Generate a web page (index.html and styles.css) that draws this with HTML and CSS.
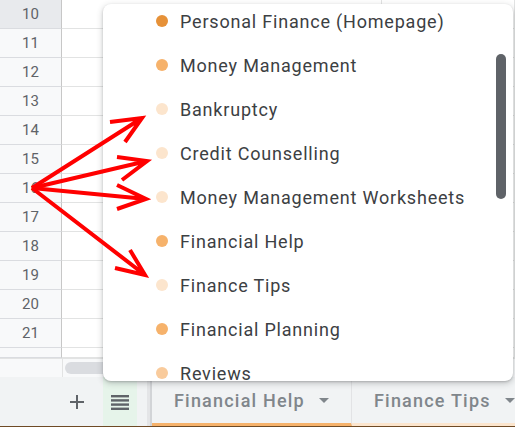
FILE: index.html
```html
<!DOCTYPE html>
<html>
<head>
<meta charset="utf-8">
<link rel="stylesheet" href="styles.css">
</head>
<body>
<div class="app">
  <div class="sheet">
    <div class="row sel"><div class="rh">10</div><div class="c c1"></div><div class="c c2"></div></div>
    <div class="row"><div class="rh">11</div><div class="c c1"></div><div class="c c2"></div></div>
    <div class="row"><div class="rh">12</div><div class="c c1"></div><div class="c c2"></div></div>
    <div class="row"><div class="rh">13</div><div class="c c1"></div><div class="c c2"></div></div>
    <div class="row"><div class="rh">14</div><div class="c c1"></div><div class="c c2"></div></div>
    <div class="row"><div class="rh">15</div><div class="c c1"></div><div class="c c2"></div></div>
    <div class="row"><div class="rh">16</div><div class="c c1"></div><div class="c c2"></div></div>
    <div class="row"><div class="rh">17</div><div class="c c1"></div><div class="c c2"></div></div>
    <div class="row"><div class="rh">18</div><div class="c c1"></div><div class="c c2"></div></div>
    <div class="row"><div class="rh">19</div><div class="c c1"></div><div class="c c2"></div></div>
    <div class="row"><div class="rh">20</div><div class="c c1"></div><div class="c c2"></div></div>
    <div class="row"><div class="rh">21</div><div class="c c1"></div><div class="c c2"></div></div>
    <div class="row part"><div class="rh"></div><div class="c c1"></div><div class="c c2"></div></div>
  </div>
  <div class="hscroll"><div class="hs-corner"></div><div class="hs-track"><div class="hs-thumb"></div></div></div>
  <div class="bottombar">
    <div class="add">
      <svg width="14" height="14" viewBox="0 0 14 14"><path d="M6 0h2v6h6v2H8v6H6V8H0V6h6z" fill="#5f6368"/></svg>
    </div>
    <div class="listbtn">
      <svg width="18" height="16" viewBox="0 0 18 16"><rect x="0" y="1" width="18" height="2.4" fill="#5f6368"/><rect x="0" y="5.2" width="18" height="2.4" fill="#5f6368"/><rect x="0" y="9.4" width="18" height="2.4" fill="#5f6368"/><rect x="0" y="13.6" width="18" height="2.4" fill="#5f6368"/></svg>
    </div>
    <div class="sep"></div>
    <div class="tab tab-a"><span>Financial Help</span><span class="caret"></span></div>
    <div class="tab tab-b"><span>Finance Tips</span><span class="caret"></span></div>
  </div>
</div>

<div class="menu">
  <ul class="list">
    <li><span class="dot d1"></span>Personal Finance (Homepage)</li>
    <li><span class="dot d2"></span>Money Management</li>
    <li><span class="dot d3"></span>Bankruptcy</li>
    <li><span class="dot d3"></span>Credit Counselling</li>
    <li><span class="dot d3"></span>Money Management Worksheets</li>
    <li><span class="dot d2"></span>Financial Help</li>
    <li><span class="dot d3"></span>Finance Tips</li>
    <li><span class="dot d2"></span>Financial Planning</li>
    <li><span class="dot d4"></span>Reviews</li>
  </ul>
  <div class="vthumb"></div>
</div>

<svg class="arrows" width="515" height="427" viewBox="0 0 515 427">
  <g stroke="#ff0000" stroke-width="4" fill="none" stroke-linecap="butt" stroke-linejoin="miter">
    <path d="M32 188L142 118M110 122L142 118L125 142"/>
    <path d="M32 188L147 161M117 157L147 161L122 180"/>
    <path d="M32 188L146 199M117 185L146 199L117 209"/>
    <path d="M32 188L145 275M130 250L145 275L115 268"/>
  </g>
</svg>
</body>
</html>
```

FILE: styles.css
```css
html, body {
  margin: 0;
  padding: 0;
}
body {
  width: 515px;
  height: 427px;
  overflow: hidden;
  position: relative;
  font-family: Roboto, "Liberation Sans", Arial, sans-serif;
  background: #fff;
}
.app {
  display: flex;
  flex-direction: column;
  height: 427px;
}
.sheet {
  height: 358px;
  overflow: hidden;
  display: flex;
  flex-direction: column;
}
.row {
  display: flex;
  height: 29px;
  flex: 0 0 29px;
}
.row.part {
  height: 10px;
  flex: 0 0 10px;
}
.rh {
  width: 62px;
  flex: 0 0 62px;
  background: #f8f9fa;
  border-right: 1px solid #c7c7c7;
  border-bottom: 1px solid #dadce0;
  box-sizing: border-box;
  display: flex;
  align-items: center;
  justify-content: center;
  font-size: 15px;
  color: #5f6368;
}
.row.sel .rh {
  background: #e8eaed;
}
.c {
  border-bottom: 1px solid #e2e3e3;
  border-right: 1px solid #e2e3e3;
  box-sizing: border-box;
}
.c1 { width: 320px; flex: 0 0 320px; }
.c2 { flex: 1; }
.hscroll {
  height: 19px;
  flex: 0 0 19px;
  display: flex;
  background: #f8f9fa;
}
.hs-corner {
  width: 63px;
  flex: 0 0 63px;
  border-right: 1px solid #e2e3e3;
  box-sizing: border-box;
  border-top: 1px solid #e2e3e3;
}
.hs-track {
  flex: 1;
  padding: 3px 2px;
  border-top: 1px solid #e2e3e3;
}
.hs-thumb {
  width: 200px;
  height: 12px;
  border-radius: 6px;
  background: #dadce0;
}
.bottombar {
  flex: 1;
  display: flex;
  background: #f1f3f4;
  border-bottom: 1px solid #6e4a25;
  align-items: stretch;
}
.add {
  width: 28px;
  margin-left: 63px;
  display: flex;
  align-items: center;
  justify-content: center;
}
.listbtn {
  width: 34px;
  margin-left: 12px;
  background: #e6f4ea;
  display: flex;
  align-items: center;
  justify-content: center;
}
.sep {
  width: 5px;
  margin-left: 10px;
  background: linear-gradient(to right, #e4e5e7 0, #e4e5e7 3px, #d2d4d7 3px);
}
.tab {
  display: flex;
  align-items: center;
  font-size: 18px;
  font-weight: 500;
  letter-spacing: 1.2px;
  color: #80868b;
  box-sizing: border-box;
  padding-left: 22px;
}
.tab-a {
  width: 200px;
  border-bottom: 3px solid #f6b26b;
  border-right: 1px solid #e2e3e5;
}
.tab-b {
  flex: 1;
  border-bottom: 3px solid #fce5cd;
}
.caret {
  width: 0;
  height: 0;
  border-left: 5px solid transparent;
  border-right: 5px solid transparent;
  border-top: 5px solid #80868b;
  margin-left: 14px;
}
.menu {
  position: absolute;
  left: 103px;
  top: 4px;
  width: 410px;
  height: 377px;
  background: #fff;
  border-radius: 8px;
  box-shadow: 0 2px 6px rgba(60, 64, 67, 0.3), 0 1px 2px rgba(60, 64, 67, 0.2);
  overflow: hidden;
}
.list {
  list-style: none;
  margin: -5px 0 0 0;
  padding: 0;
}
.list li {
  height: 44px;
  display: flex;
  align-items: center;
  font-size: 18px;
  letter-spacing: 0.8px;
  color: #3c4043;
  padding-left: 53px;
}
.dot {
  width: 12px;
  height: 12px;
  border-radius: 50%;
  margin-right: 12px;
  flex: 0 0 12px;
}
.d1 { background: #e69138; }
.d2 { background: #f6b26b; }
.d3 { background: #fce5cd; }
.d4 { background: #f9cb9c; }
.vthumb {
  position: absolute;
  left: 393px;
  top: 50px;
  width: 10px;
  height: 145px;
  border-radius: 5px;
  background: #5f6368;
}
.arrows {
  position: absolute;
  left: 0;
  top: 0;
  pointer-events: none;
}
```
